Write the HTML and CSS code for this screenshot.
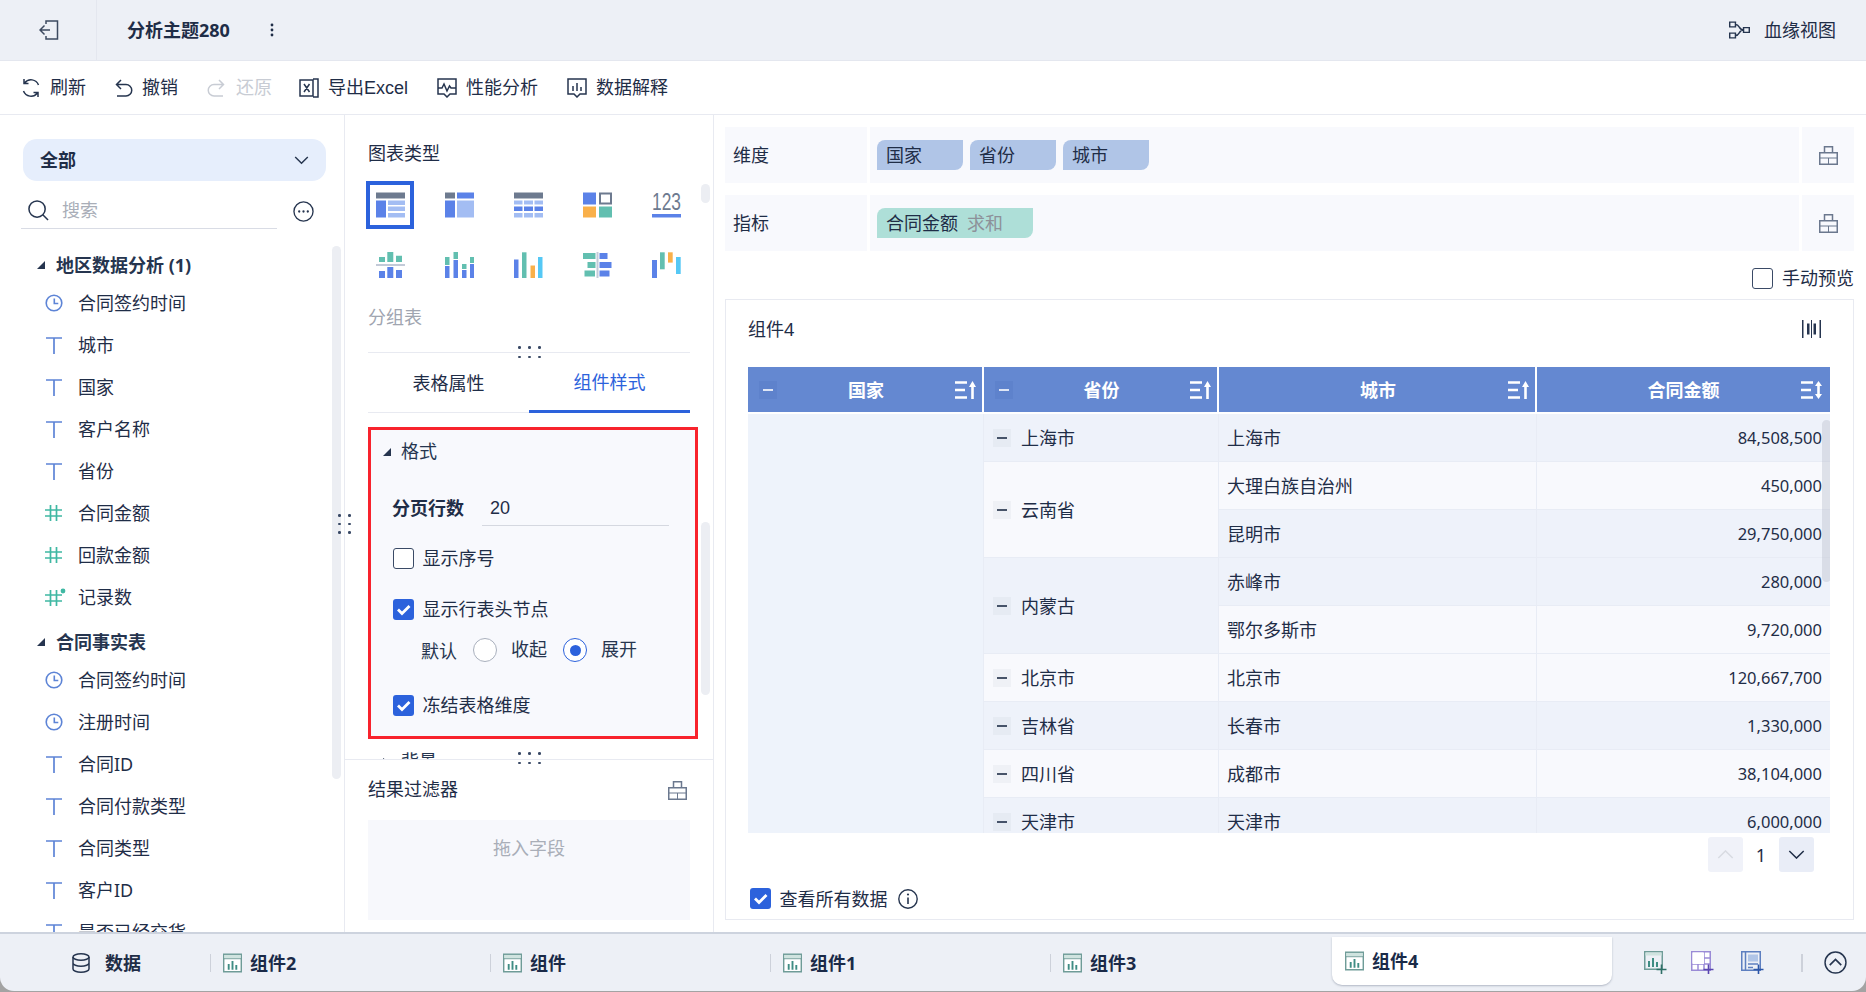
FILE: index.html
```html
<!DOCTYPE html>
<html lang="zh-CN">
<head>
<meta charset="utf-8">
<title>分析主题280</title>
<link rel="stylesheet" href="styles.css">
</head>
<body>
<svg class="defs" xmlns="http://www.w3.org/2000/svg">
  <symbol id="i-lock" viewBox="0 0 19 19"><path d="M.75 6.750h17.500v11.500H.75zM5.500 6.750V.75h8v6" fill="none" stroke="#6b788e" stroke-width="1.500"/><path d="M1 12h17M9.500 12v6" fill="none" stroke="#6b788e"/></symbol>
  <symbol id="i-clock" viewBox="0 0 18 18"><circle cx="9" cy="9" r="7.800" fill="none" stroke="#5d84d6" stroke-width="1.600"/><path d="M9.300 4.500v5h4" fill="none" stroke="#5d84d6" stroke-width="1.600"/></symbol>
  <symbol id="i-text" viewBox="0 0 18 18"><path d="M1 2h16M9 2v16" fill="none" stroke="#5d84d6" stroke-width="1.700"/></symbol>
  <symbol id="i-num" viewBox="0 0 18 18"><path d="M0 6h17M0 12h17M5.500 1v16M11.500 1v16" fill="none" stroke="#3fb8a3" stroke-width="1.700"/></symbol>
  <symbol id="i-numx" viewBox="0 0 21 18"><path d="M0 7h17M0 13h17M5.500 2v16M11.500 2v16" fill="none" stroke="#3fb8a3" stroke-width="1.700"/><circle cx="18" cy="3" r="2.400" fill="#3fb8a3"/></symbol>
  <symbol id="i-tab" viewBox="0 0 20 20"><path d="M.75.75h18.500v18.500H.75z" fill="#fff" stroke="#6f9c98" stroke-width="1.500"/><path d="M1.500 1.500h17V5h-17z" fill="#cfe3df"/><path d="M1 5.500h18" stroke="#6f9c98"/><path d="M5 11h2v6H5zM9 8h2v9H9zM13 12h2v5h-2z" fill="#3f8d84"/></symbol>
  <symbol id="i-check" viewBox="0 0 21 21"><path d="M5 10.500l4 4 7.500-7.500" fill="none" stroke="#fff" stroke-width="2.800"/></symbol>
  <symbol id="i-sort-up" viewBox="0 0 21 18"><path d="M0 1.500h12M0 9h10M0 16.500h12" stroke="#fff" stroke-width="2.400"/><path d="M17.500 0l3.500 6h-2.200v12h-2.600V6H14z" fill="#fff"/></symbol>
  <symbol id="i-sort-both" viewBox="0 0 21 18"><path d="M0 1.500h12M0 9h10M0 16.500h12" stroke="#fff" stroke-width="2.400"/><path d="M17.500 0l3.500 5h-2.200v8H21l-3.500 5-3.500-5h2.200V5H14z" fill="#fff"/></symbol>
  <symbol id="i-minus" viewBox="0 0 18 18"><path d="M4 9h10" fill="none" stroke="currentColor" stroke-width="1.600"/></symbol>
</svg>

<div class="app">
  <header class="topbar">
    <div class="back">
      <svg class="ic-back" viewBox="0 0 20 20"><path d="M7 4V1h11.500v18H7v-3M1 10h10M5.500 5.500L1 10l4.500 4.500" fill="none" stroke="#3d4a60" stroke-width="1.500"/></svg>
    </div>
    <div class="doc-title">分析主题280</div>
    <svg class="ic-more" viewBox="0 0 4 14"><circle cx="2" cy="2" r="1.400" fill="#1f2d47"/><circle cx="2" cy="7" r="1.400" fill="#1f2d47"/><circle cx="2" cy="12" r="1.400" fill="#1f2d47"/></svg>
    <div class="lineage">
      <svg class="ic-lineage" viewBox="0 0 22 18"><path d="M.75.75h6v5h-6zM.75 12.250h6v5h-6zM15.250 6.500h6v5h-6zM6.750 3.250c5 0 3 5.750 8.500 5.750M6.750 14.750c5 0 3-5.750 8.500-5.750" fill="none" stroke="#26354f" stroke-width="1.500"/></svg>
      <span>血缘视图</span>
    </div>
  </header>

  <nav class="toolbar">
    <div class="tool">
      <svg class="ic20" viewBox="0 0 20 20"><path d="M17.500 7A8 8 0 0 0 3.600 5M2.500 13a8 8 0 0 0 13.900 2M3 1v4.500h4.500M17 19v-4.500h-4.500" fill="none" stroke="#26354f" stroke-width="1.500"/></svg>
      <span>刷新</span>
    </div>
    <div class="tool">
      <svg class="ic18" viewBox="0 0 18 20"><path d="M6 2L1.500 6.500 6 11M1.500 6.500H11a5.700 5.700 0 0 1 0 11.500H2" fill="none" stroke="#26354f" stroke-width="1.500"/></svg>
      <span>撤销</span>
    </div>
    <div class="tool off">
      <svg class="ic18" viewBox="0 0 18 20"><path d="M12 2l4.500 4.500L12 11M16.500 6.500H7a5.700 5.700 0 0 0 0 11.500h9" fill="none" stroke="#c8ccd4" stroke-width="1.500"/></svg>
      <span>还原</span>
    </div>
    <div class="tool">
      <svg class="ic20" viewBox="0 0 20 20"><path d="M1 2h13v16H1zM14 1h5v18h-5M5 6l5.500 8M10.500 6L5 14" fill="none" stroke="#26354f" stroke-width="1.500"/></svg>
      <span>导出Excel</span>
    </div>
    <div class="tool">
      <svg class="ic20" viewBox="0 0 20 20"><path d="M7 16H1V1h18v15h-6l-3 3zM1 10h4l2-4 3 7 2.500-5 1.500 2h5" fill="none" stroke="#26354f" stroke-width="1.500"/></svg>
      <span>性能分析</span>
    </div>
    <div class="tool">
      <svg class="ic20" viewBox="0 0 20 20"><path d="M7 16H1V1h18v15h-6l-3 3zM6 8v5M10 5v8M14 9v4" fill="none" stroke="#26354f" stroke-width="1.500"/></svg>
      <span>数据解释</span>
    </div>
  </nav>

  <main class="main">
    <aside class="fields">
      <div class="pill"><span>全部</span><svg class="ic-chev" viewBox="0 0 16 10"><path d="M1 1l7 7 7-7" fill="none" stroke="#26354f" stroke-width="1.600"/></svg></div>
      <div class="search">
        <div class="search-box">
          <svg class="ic-search" viewBox="0 0 22 22"><circle cx="9.500" cy="9.500" r="8.500" fill="none" stroke="#26354f" stroke-width="1.600"/><path d="M15.500 15.500L21 21" stroke="#26354f" stroke-width="1.600"/></svg>
          <span>搜索</span>
        </div>
        <svg class="ic-dots" viewBox="0 0 22 22"><circle cx="11" cy="11" r="10" fill="none" stroke="#26354f" stroke-width="1.400"/><circle cx="6.500" cy="11" r="1.200" fill="#26354f"/><circle cx="11" cy="11" r="1.200" fill="#26354f"/><circle cx="15.500" cy="11" r="1.200" fill="#26354f"/></svg>
      </div>
      <div class="group"><i class="tri"></i>地区数据分析 (1)</div>
      <div class="field"><svg class="fi"><use href="#i-clock"/></svg>合同签约时间</div>
      <div class="field"><svg class="fi"><use href="#i-text"/></svg>城市</div>
      <div class="field"><svg class="fi"><use href="#i-text"/></svg>国家</div>
      <div class="field"><svg class="fi"><use href="#i-text"/></svg>客户名称</div>
      <div class="field"><svg class="fi"><use href="#i-text"/></svg>省份</div>
      <div class="field"><svg class="fi"><use href="#i-num"/></svg>合同金额</div>
      <div class="field"><svg class="fi"><use href="#i-num"/></svg>回款金额</div>
      <div class="field"><svg class="fi fi-x"><use href="#i-numx"/></svg>记录数</div>
      <div class="group group2"><i class="tri"></i>合同事实表</div>
      <div class="field"><svg class="fi"><use href="#i-clock"/></svg>合同签约时间</div>
      <div class="field"><svg class="fi"><use href="#i-clock"/></svg>注册时间</div>
      <div class="field"><svg class="fi"><use href="#i-text"/></svg>合同ID</div>
      <div class="field"><svg class="fi"><use href="#i-text"/></svg>合同付款类型</div>
      <div class="field"><svg class="fi"><use href="#i-text"/></svg>合同类型</div>
      <div class="field"><svg class="fi"><use href="#i-text"/></svg>客户ID</div>
      <div class="field"><svg class="fi"><use href="#i-text"/></svg>是否已经交货</div>
      <div class="scroll scroll-fields"></div>
    </aside>

    <section class="config">
      <div class="config-top">
        <div class="sec-title">图表类型</div>
        <div class="chart-grid">
          <div class="chart sel"><svg class="ci" viewBox="0 0 29 25"><path d="M0 0h29v6H0z" fill="#6d7a8f"/><path d="M0 8h10v17H0z" fill="#5b82e8"/><path d="M12 8h17v4.500H12zM12 14h17v4.500H12zM12 20.500h17V25H12z" fill="#a3bdf3"/></svg></div>
          <div class="chart"><svg class="ci" viewBox="0 0 29 25"><path d="M0 0h10v6H0z" fill="#6d7a8f"/><path d="M12 0h17v6H12zM0 8h10v17H0z" fill="#5b82e8"/><path d="M12 8h17v17H12z" fill="#a3bdf3"/></svg></div>
          <div class="chart"><svg class="ci" viewBox="0 0 29 25"><path d="M0 0h29v6H0z" fill="#6d7a8f"/><path d="M0 8h8.500v4H0zM10 8h9v4h-9zM20.500 8H29v4h-8.500zM0 20.500h8.500V25H0zM10 20.500h9V25h-9zM20.500 20.500H29V25h-8.500z" fill="#a3bdf3"/><path d="M0 14h8.500v4.500H0zM10 14h9v4.500h-9zM20.500 14H29v4.500h-8.500z" fill="#5b82e8"/></svg></div>
          <div class="chart"><svg class="ci" viewBox="0 0 29 25"><path d="M0 0h13v12H0z" fill="#5b82e8"/><path d="M17 1h11v10H17z" fill="#fff" stroke="#6d7a8f" stroke-width="2"/><path d="M0 14h13v11H0z" fill="#f9b04a"/><path d="M16 14h13v11H16z" fill="#62bfb0"/></svg></div>
          <div class="chart"><svg class="ci" viewBox="0 0 29 25"><text class="ci-num" x="0" y="17" textLength="29" lengthAdjust="spacingAndGlyphs">123</text><path d="M0 21.500h29V25H0z" fill="#5b82e8"/></svg></div>
          <div class="chart"><svg class="ci" viewBox="0 0 29 26"><path d="M3 5h6v5H3zM11.300 0h6v10h-6zM20 3.700h6V10h-6z" fill="#62bfb0"/><path d="M0 12h29v2H0z" fill="#c3cad8"/><path d="M3 19h6v7H3zM11.300 15h6v11h-6zM20 18h6v8h-6z" fill="#5b82e8"/></svg></div>
          <div class="chart"><svg class="ci" viewBox="0 0 29 26"><path d="M0 5h4.500v8H0zM8.500 0H13v7H8.500zM17 12h4.500v5H17zM25 5h4v6h-4z" fill="#62bfb0"/><path d="M0 14h4.500v12H0zM8.500 8H13v18H8.500zM17 18h4.500v8H17zM25 12h4v14h-4z" fill="#5b82e8"/></svg></div>
          <div class="chart"><svg class="ci" viewBox="0 0 29 26"><path d="M0 7.500h4.500V26H0z" fill="#5b82e8"/><path d="M8 .3h4.500V26H8z" fill="#62bfb0"/><path d="M16.500 13.500H21V26h-4.500z" fill="#f9b04a"/><path d="M24 5h4.500v21H24z" fill="#55c8f5"/></svg></div>
          <div class="chart"><svg class="ci" viewBox="0 0 29 26"><path d="M0 1h12.500v6H0zM4.500 10h8v6h-8zM1.500 18.500H12v6H1.500z" fill="#62bfb0"/><path d="M13.500 0h2v26h-2z" fill="#c3cad8"/><path d="M16.500 1h8v6h-8zM16.500 10h12v6h-12zM16.500 18.500h10v6h-10z" fill="#5b82e8"/></svg></div>
          <div class="chart"><svg class="ci" viewBox="0 0 29 26"><path d="M0 8h5v18H0z" fill="#5b82e8"/><path d="M8 .3h4.700v17H8z" fill="#62bfb0"/><path d="M16 .3h4.700v10.300H16z" fill="#f9b04a"/><path d="M24 5h4.700v17H24z" fill="#55c8f5"/></svg></div>
        </div>
        <div class="type-name">分组表</div>
        <div class="tabs">
          <div class="tab-item">表格属性</div>
          <div class="tab-item on">组件样式</div>
        </div>
        <div class="format-box">
          <div class="fmt-head"><i class="tri"></i>格式</div>
          <div class="fmt-input"><b>分页行数</b><div class="inp">20</div></div>
          <label class="chk chk1"><span class="box"></span>显示序号</label>
          <label class="chk chk2"><span class="box on"><svg><use href="#i-check"/></svg></span>显示行表头节点</label>
          <div class="radios">
            <span class="r-label">默认</span>
            <span class="radio"></span>
            <span class="r-text">收起</span>
            <span class="radio on"></span>
            <span>展开</span>
          </div>
          <label class="chk chk3"><span class="box on"><svg><use href="#i-check"/></svg></span>冻结表格维度</label>
        </div>
        <div class="collapsed"><i class="tri tri-r"></i>背景</div>
      </div>
      <div class="config-bottom">
        <div class="filter-head"><span>结果过滤器</span><svg class="ic-lock"><use href="#i-lock"/></svg></div>
        <div class="drop">拖入字段</div>
      </div>
      <div class="scroll scroll-a"></div>
      <div class="scroll scroll-b"></div>
    </section>

    <section class="canvas">
      <div class="slot">
        <div class="slot-label">维度</div>
        <div class="slot-body">
          <span class="chip">国家</span><span class="chip">省份</span><span class="chip">城市</span>
        </div>
        <div class="slot-side"><svg class="ic-lock"><use href="#i-lock"/></svg></div>
      </div>
      <div class="slot">
        <div class="slot-label">指标</div>
        <div class="slot-body">
          <span class="chip green">合同金额<em>求和</em></span>
        </div>
        <div class="slot-side"><svg class="ic-lock"><use href="#i-lock"/></svg></div>
      </div>
      <div class="manual"><span class="box"></span>手动预览</div>
      <div class="card">
        <div class="card-head">
          <span>组件4</span>
          <svg class="ic-bars" viewBox="0 0 19 18"><path d="M.75 0v18M18.250 0v18" stroke="#26354f" stroke-width="1.500"/><path d="M5 3.500h2.500v11H5zM11.500 3.500H14v11h-2.500z" fill="#26354f"/><path d="M9.500 0v18" stroke="#26354f"/></svg>
        </div>
        <div class="table">
          <div class="thead">
            <div class="th"><span class="slot-l"><span class="hbox"><svg><use href="#i-minus"/></svg></span></span><b>国家</b><span class="slot-r"><svg class="sort"><use href="#i-sort-up"/></svg></span></div>
            <div class="th"><span class="slot-l"><span class="hbox"><svg><use href="#i-minus"/></svg></span></span><b>省份</b><span class="slot-r"><svg class="sort"><use href="#i-sort-up"/></svg></span></div>
            <div class="th"><span class="slot-l"></span><b>城市</b><span class="slot-r"><svg class="sort"><use href="#i-sort-up"/></svg></span></div>
            <div class="th"><span class="slot-l"></span><b>合同金额</b><span class="slot-r"><svg class="sort"><use href="#i-sort-both"/></svg></span></div>
          </div>
          <div class="tbody">
            <div class="td country"></div>

            <div class="td prov a"><span class="mbox"><svg><use href="#i-minus"/></svg></span>上海市</div>
            <div class="td city a">上海市</div><div class="td amt a">84,508,500</div>

            <div class="td prov b span2"><span class="mbox"><svg><use href="#i-minus"/></svg></span>云南省</div>
            <div class="td city b">大理白族自治州</div><div class="td amt b">450,000</div>
            <div class="td city a">昆明市</div><div class="td amt a">29,750,000</div>

            <div class="td prov a span2"><span class="mbox"><svg><use href="#i-minus"/></svg></span>内蒙古</div>
            <div class="td city a">赤峰市</div><div class="td amt a">280,000</div>
            <div class="td city b">鄂尔多斯市</div><div class="td amt b">9,720,000</div>

            <div class="td prov b"><span class="mbox"><svg><use href="#i-minus"/></svg></span>北京市</div>
            <div class="td city b">北京市</div><div class="td amt b">120,667,700</div>

            <div class="td prov a"><span class="mbox"><svg><use href="#i-minus"/></svg></span>吉林省</div>
            <div class="td city a">长春市</div><div class="td amt a">1,330,000</div>

            <div class="td prov b"><span class="mbox"><svg><use href="#i-minus"/></svg></span>四川省</div>
            <div class="td city b">成都市</div><div class="td amt b">38,104,000</div>

            <div class="td prov a"><span class="mbox"><svg><use href="#i-minus"/></svg></span>天津市</div>
            <div class="td city a">天津市</div><div class="td amt a">6,000,000</div>
          </div>
          <div class="table-scroll"></div>
        </div>
        <div class="pager">
          <span class="pg dis"><svg viewBox="0 0 18 10"><path d="M1 9l8-8 8 8" fill="none" stroke="#d8dbe2" stroke-width="1.600"/></svg></span>
          <span class="pg-num">1</span>
          <span class="pg"><svg viewBox="0 0 18 10"><path d="M1 1l8 8 8-8" fill="none" stroke="#1f2d47" stroke-width="1.600"/></svg></span>
        </div>
        <div class="all-data">
          <span class="box on"><svg><use href="#i-check"/></svg></span>查看所有数据
          <svg class="ic-info" viewBox="0 0 20 20"><circle cx="10" cy="10" r="9.200" fill="none" stroke="#26354f" stroke-width="1.400"/><path d="M10 8.500V15" stroke="#26354f" stroke-width="1.600"/><circle cx="10" cy="5.500" r="1.100" fill="#26354f"/></svg>
        </div>
      </div>
    </section>

    <div class="grip grip-v"><i></i><i></i><i></i><i></i><i></i><i></i></div>
    <div class="grip grip-h grip-h1"><i></i><i></i><i></i><i></i><i></i><i></i></div>
    <div class="grip grip-h grip-h2"><i></i><i></i><i></i><i></i><i></i><i></i></div>
  </main>

  <footer class="sheets">
    <div class="data-tab">
      <svg class="ic-db" viewBox="0 0 18 20"><ellipse cx="9" cy="4" rx="8" ry="3.200" fill="none" stroke="#26354f" stroke-width="1.500"/><path d="M1 4v12c0 1.800 3.600 3.200 8 3.200s8-1.400 8-3.200V4M1 10c0 1.800 3.600 3.200 8 3.200s8-1.400 8-3.200" fill="none" stroke="#26354f" stroke-width="1.500"/></svg>
      <b>数据</b>
    </div>
    <div class="sheet"><svg class="ic-tab"><use href="#i-tab"/></svg><b>组件2</b></div>
    <div class="sheet"><svg class="ic-tab"><use href="#i-tab"/></svg><b>组件</b></div>
    <div class="sheet"><svg class="ic-tab"><use href="#i-tab"/></svg><b>组件1</b></div>
    <div class="sheet"><svg class="ic-tab"><use href="#i-tab"/></svg><b>组件3</b></div>
    <div class="sheet active"><svg class="ic-tab"><use href="#i-tab"/></svg><b>组件4</b></div>
    <div class="sheet-tools">
      <svg class="st st1" viewBox="0 0 23 23"><path d="M.75.75h17.500v17.500H.75z" fill="none" stroke="#6f9c98" stroke-width="1.500"/><path d="M1.500 1.500h16v3h-16z" fill="#cfe3df"/><path d="M4 10h2v6H4zM8 7h2v9H8zM12 11h2v5h-2z" fill="#3f8d84"/><path d="M12.500 18.500h10M17.500 13.500V23" stroke="#2f6f67" stroke-width="1.600"/></svg>
      <svg class="st st2" viewBox="0 0 23 23"><path d="M.75.75h18.500v18.500H.75z" fill="#fff" stroke="#9a8bd6" stroke-width="1.500"/><path d="M13 1v18M1 13h18M13 7h6M7 13v6" stroke="#9a8bd6" stroke-width="1.500"/><path d="M1.500 1.500H13V13H1.500z" fill="#fff"/><path d="M12.500 18.500h10M17.500 13.500V23" stroke="#5a46b0" stroke-width="1.600"/></svg>
      <svg class="st st3" viewBox="0 0 23 23"><path d="M.75.75h18.500v18.500H.75zM4.500 1v18" fill="none" stroke="#5d7fc0" stroke-width="1.500"/><path d="M7 3.500h10v7H7z" fill="#b0c5e7"/><path d="M7 13h10M7 16.500h5" stroke="#5d7fc0" stroke-width="1.500"/><path d="M12.500 18.500h10M17.500 13.500V23" stroke="#2c56a8" stroke-width="1.600"/></svg>
      <span class="st-sep"></span>
      <svg class="st st4" viewBox="0 0 22 22"><circle cx="11" cy="11" r="10" fill="none" stroke="#26354f" stroke-width="1.400"/><path d="M5.500 13.500L11 8l5.500 5.500" fill="none" stroke="#26354f" stroke-width="1.600"/></svg>
    </div>
  </footer>
</div>
</body>
</html>
```

FILE: styles.css
```css
* { box-sizing: border-box; }
html, body { margin: 0; padding: 0; height: 100%; overflow: hidden; }
body {
  font-family: "Noto Sans", "Noto Sans CJK SC", sans-serif;
  font-size: 18px;
  line-height: 26px;
  color: #1f2d47;
}
b { font-weight: 700; }
i, em { font-style: normal; }
svg { display: block; flex: none; }
.defs { position: absolute; width: 0; height: 0; }

.app { display: flex; flex-direction: column; width: 1866px; height: 992px; background: #a3a3a3; overflow: hidden; }

/* top */
.topbar { display: flex; align-items: center; height: 61px; flex: none; background: #edf0f6; border-bottom: 1px solid #e4e7ef; }
.back { display: flex; align-items: center; width: 97px; height: 60px; padding-left: 39px; border-right: 1px solid #e4e7ef; }
.ic-back { width: 20px; height: 20px; }
.doc-title { margin-left: 30px; font-weight: 700; }
.ic-more { width: 4px; height: 14px; margin-left: 40px; }
.lineage { display: flex; align-items: center; gap: 14px; margin-left: auto; padding-right: 30px; }
.ic-lineage { width: 21px; height: 18px; }

.toolbar { display: flex; align-items: center; gap: 29px; height: 54px; flex: none; padding: 0 0 0 21px; background: #fff; border-bottom: 1px solid #e8eaf1; font-family: "Liberation Sans", "Noto Sans CJK SC", sans-serif; }
.tool { display: flex; align-items: center; gap: 9px; }
.tool.off { gap: 11px; margin-right: -2px; color: #c8ccd4; }
.ic20 { width: 20px; height: 20px; }
.ic18 { width: 18px; height: 20px; }

/* main */
.main { position: relative; display: flex; flex: none; height: 817px; background: #fff; overflow: hidden; }

.fields { position: relative; flex: none; width: 345px; padding: 24px 0 0 0; border-right: 1px solid #e8eaf1; overflow: hidden; }
.pill { display: flex; align-items: center; justify-content: space-between; width: 303px; height: 42px; margin-left: 23px; padding: 0 17px; background: #e6eefc; border-radius: 14px; font-weight: 700; }
.ic-chev { width: 15px; height: 9px; }
.search { display: flex; align-items: center; margin: 12px 0 0 21px; }
.search-box { display: flex; align-items: center; gap: 13px; width: 256px; height: 36px; padding-left: 7px; border-bottom: 1px solid #d9dce5; color: #a9aeb8; font-family: "Liberation Sans", "Noto Sans CJK SC", sans-serif; }
.ic-search { width: 21px; height: 21px; }
.ic-dots { width: 21px; height: 21px; margin-left: 16px; }
.group { display: flex; align-items: center; height: 34px; margin-top: 19px; padding-left: 37px; font-weight: 700; color: #26354f; }
.group2 { margin-top: 7px; }
.tri { display: inline-block; width: 0; height: 0; margin-right: 11px; border-style: solid; border-width: 0 0 8px 8px; border-color: transparent transparent #26354f transparent; }
.field { display: flex; align-items: center; height: 42px; padding-left: 45px; white-space: nowrap; }
.fi { width: 18px; height: 18px; margin-right: 15px; }
.fi-x { width: 21px; margin-right: 12px; }

.scroll { position: absolute; width: 9px; background: #eceef3; border-radius: 5px; }
.scroll-fields { left: 332px; top: 131px; height: 533px; }

.config { position: relative; display: flex; flex-direction: column; flex: none; width: 369px; border-right: 1px solid #e8eaf1; font-family: "Liberation Sans", "Noto Sans CJK SC", sans-serif; }
.config-top { flex: none; height: 644px; padding: 26px 0 0 23px; overflow: hidden; }
.sec-title { height: 25px; }
.chart-grid { display: grid; grid-template-columns: repeat(5, 48px); grid-auto-rows: 48px; gap: 12px 21px; margin: 15px 0 0 -2px; }
.chart { display: flex; align-items: center; justify-content: center; }
.chart.sel { border: 4px solid #2c62dc; }
.ci { width: 29px; height: 26px; }
.ci-num { font-family: "Liberation Sans", sans-serif; font-size: 23px; fill: #6d7a8f; }
.type-name { margin-top: 16px; color: #a0a5b0; }
.tabs { display: flex; width: 322px; height: 61px; margin-top: 21px; border-top: 1px solid #e8eaf1; }
.tab-item { flex: 1; display: flex; align-items: center; justify-content: center; padding-top: 2px; border-bottom: 1px solid #e8eaf1; }
.tab-item.on { color: #2c62dc; border-bottom: 3px solid #2c62dc; }

.format-box { width: 330px; height: 312px; margin-top: 14px; padding: 9px 0 0 12px; background: #f8f9fd; border: 3px solid #f8232d; }
.fmt-head { display: flex; align-items: center; height: 26px; color: #26354f; }
.fmt-head .tri { margin-right: 10px; }
.fmt-input { display: flex; align-items: center; height: 35px; margin: 26px 0 0 9px; }
.inp { width: 187px; height: 35px; margin-left: 18px; padding-left: 8px; line-height: 34px; border-bottom: 1px solid #d5d8e0; }
.chk { display: flex; align-items: center; gap: 8.5px; height: 21px; margin-left: 10px; }
.chk1 { margin-top: 22px; }
.chk2 { margin-top: 30px; }
.chk3 { margin-top: 33px; }
.box { display: block; flex: none; width: 21px; height: 21px; background: #fff; border: 1px solid #3a4a66; border-radius: 3px; }
.box.on { background: #2c62dc; border: 0; }
.box svg { width: 21px; height: 21px; }
.radios { display: flex; align-items: center; height: 24px; margin: 18px 0 0 38px; color: #26354f; }
.r-label { margin-top: 4px; }
.radio { flex: none; display: flex; align-items: center; justify-content: center; width: 24px; height: 24px; margin: 0 14px 0 16px; background: #fff; border: 1px solid #a9b0bd; border-radius: 50%; }
.r-text { margin-top: -1px; }
.radio.on { margin: 0 14px 0 16px; border-color: #2c62dc; }
.radio.on::after { content: ""; width: 11px; height: 11px; background: #2c62dc; border-radius: 50%; }
.collapsed { display: flex; align-items: center; height: 26px; margin: 10px 0 0 15px; color: #26354f; }
.tri-r { border-width: 4px 0 4px 6px; border-color: transparent transparent transparent #26354f; margin-right: 12px; }

.config-bottom { flex: 1; padding: 17px 23px 0; border-top: 1px solid #e8eaf1; background: #fff; }
.filter-head { display: flex; align-items: center; justify-content: space-between; height: 26px; padding-right: 3px; }
.ic-lock { width: 19px; height: 19px; }
.drop { height: 100px; margin-top: 17px; padding-top: 16px; text-align: center; background: #f7f8fc; color: #a9aeb8; }
.scroll-a { left: 356px; top: 69px; height: 19px; }
.scroll-b { left: 356px; top: 407px; height: 173px; }

/* right */
.canvas { flex: 1; min-width: 0; padding: 12px 12px 0 11px; }
.slot { display: flex; gap: 3px; height: 56px; margin-bottom: 12px; }
.slot-label { display: flex; align-items: center; width: 142px; padding-left: 8px; background: #f8f9fd; }
.slot-body { flex: 1; display: flex; align-items: center; gap: 7px; padding-left: 7px; background: #f8f9fd; }
.slot-side { display: flex; align-items: center; justify-content: center; width: 52px; background: #f8f9fd; }
.chip { display: flex; align-items: center; width: 86px; height: 30px; padding-left: 9px; background: #b0c5e7; border-radius: 8px 0 8px 0; color: #1f2d47; }
.chip.green { width: 156px; background: #aedfd8; }
.chip em { margin-left: 9px; color: #8d9199; }
.manual { display: flex; align-items: flex-start; justify-content: flex-end; gap: 9px; height: 48px; margin-top: -12px; padding-top: 17px; line-height: 21px; }
.card { height: 621px; padding: 0 23px 0 22px; border: 1px solid #e8eaf1; }
.card-head { display: flex; align-items: center; justify-content: space-between; height: 58px; padding-right: 9px; }
.ic-bars { width: 19px; height: 18px; }
.table { position: relative; height: 466px; margin-top: 9px; overflow: hidden; }
.thead { display: grid; grid-template-columns: 236px 235px 318px 293px; height: 47px; }
.th { display: grid; grid-template-columns: 1fr auto 1fr; align-items: center; padding: 0 6px 0 8px; height: 47px; background: #6488d1; color: #fff; border-right: 2px solid #fff; border-bottom: 2px solid #fff; }
.th:last-child { border-right: 0; padding-right: 8px; }
.slot-l { display: flex; padding-left: 3px; }
.slot-r { display: flex; justify-content: flex-end; }
.hbox { display: block; width: 18px; height: 18px; background: #5e82cc; color: #fff; }
.hbox svg, .mbox svg { width: 18px; height: 18px; }
.sort { width: 21px; height: 18px; }
.tbody { display: grid; grid-template-columns: 236px 235px 318px 293px; grid-auto-rows: 48px; }
.td { display: flex; align-items: center; padding-top: 1px; border-right: 1px solid #e8ecf5; border-bottom: 1px solid #e8ecf5; white-space: nowrap; overflow: hidden; }
.a { background: #eef2fa; }
.b { background: #f8f9fd; }
.country { grid-row: span 9; background: #eef3fb; }
.prov { gap: 10px; padding-left: 9px; }
.span2 { grid-row: span 2; }
.city { padding-left: 8px; }
.amt { justify-content: flex-end; padding-right: 8px; font-size: 16.5px; border-right: 0; }
.mbox { display: block; flex: none; width: 18px; height: 18px; background: #e6ebf3; color: #1f2d47; }
.b .mbox { background: #eff1f6; }
.table-scroll { position: absolute; right: -1px; top: 53px; width: 9px; height: 162px; background: rgba(190, 196, 208, .45); border-radius: 5px; }
.pager { display: flex; align-items: center; justify-content: flex-end; height: 35px; margin-top: 4px; padding-right: 16px; }
.pg { display: flex; align-items: center; justify-content: center; width: 35px; height: 35px; background: #e9edf7; border-radius: 3px; }
.pg.dis { background: #f0f2f9; }
.pg svg { width: 17px; height: 9px; }
.pg-num { width: 36px; text-align: center; }
.all-data { display: flex; align-items: center; gap: 8.5px; height: 21px; margin: 16px 0 0 2px; }
.ic-info { width: 20px; height: 20px; margin-left: 2px; }

/* grips */
.grip { position: absolute; display: grid; gap: 6px 7px; }
.grip i { width: 2.5px; height: 2.5px; background: #3a4a66; border-radius: 50%; }
.grip-v { left: 338px; top: 399px; grid-template-columns: repeat(2, 3px); gap: 6px 7px; }
.grip-h { grid-template-columns: repeat(3, 3px); gap: 7px 7px; }
.grip-h1 { left: 518px; top: 231px; }
.grip-h2 { left: 518px; top: 637px; }

/* bottom */
.sheets { display: flex; align-items: center; flex: none; width: 1866px; height: 59px; background: #edf0f6; border-top: 2px solid #cdd3de; border-radius: 0 0 14px 14px; }
.data-tab { display: flex; align-items: center; gap: 15px; width: 210px; padding-left: 72px; }
.ic-db { width: 18px; height: 20px; }
.sheet { position: relative; display: flex; align-items: center; gap: 8px; width: 280px; height: 48px; padding-left: 13px; }
.sheet::before { content: ""; position: absolute; left: 0; top: 15px; width: 1px; height: 18px; background: #cdd1da; }
.sheet b { color: #1a2a48; }
.ic-tab { width: 19px; height: 20px; }
.sheet.active { margin-left: 2px; margin-top: -3px; background: #fff; border-radius: 0 0 10px 10px; box-shadow: 0 1px 2px rgba(120, 130, 150, .5); }
.sheet.active::before { display: none; }
.sheet-tools { display: flex; align-items: center; margin-left: 32px; }
.st { width: 23px; height: 23px; }
.st2 { margin-left: 24px; }
.st3 { margin-left: 27px; }
.st-sep { width: 2px; height: 18px; margin-left: 37px; background: #cdd1da; }
.st4 { width: 23px; height: 23px; margin-left: 21px; }
```
